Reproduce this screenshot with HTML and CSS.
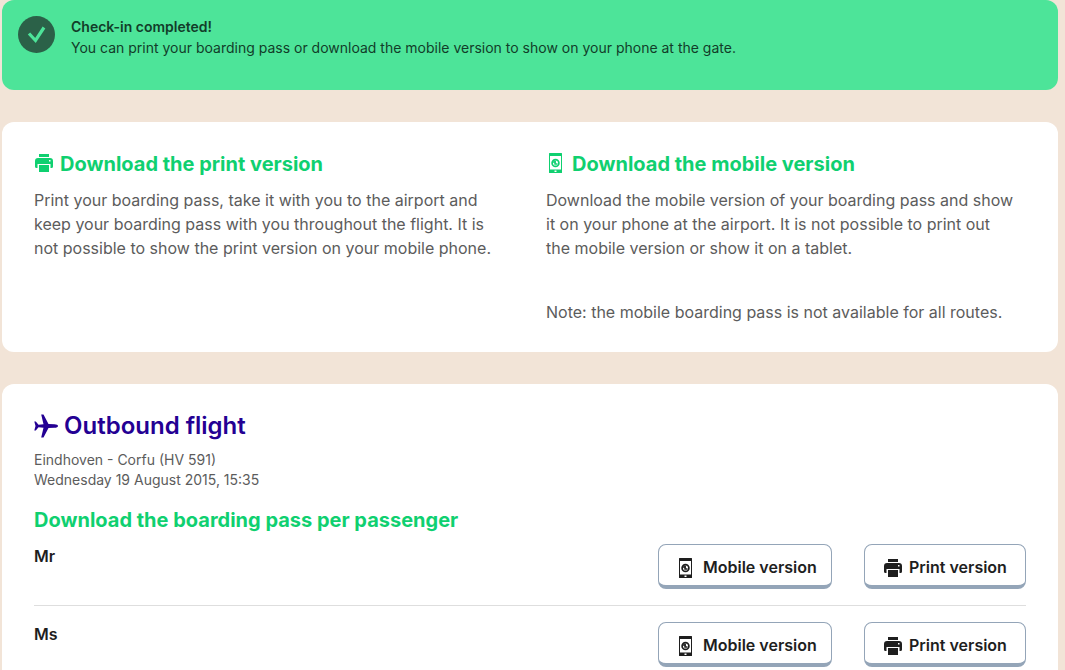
FILE: index.html
```
<!DOCTYPE html>
<html lang="en">
<head>
    <meta charset="UTF-8">
    <meta name="viewport" content="width=device-width, initial-scale=1.0">
    <title>Check-in completed</title>
    <link rel="stylesheet" href="styles.css">
</head>
<body>
    <!-- shared icons -->
    <svg class="sprite" aria-hidden="true">
        <symbol id="icon-print" viewBox="0 0 18 18">
            <path fill="currentColor" d="M4 0h10v3H4z"/>
            <path fill="currentColor" fill-rule="evenodd" d="M3 4h12a3 3 0 0 1 3 3v5.500a1.500 1.500 0 0 1-1.500 1.500H15.500V10H2.500v4H1.500A1.500 1.500 0 0 1 0 12.500V7a3 3 0 0 1 3-3zM14 6v1.500h1.500V6z"/>
            <path fill="currentColor" d="M4 11h10v7H4z"/>
        </symbol>
        <symbol id="icon-mobile" viewBox="0 0 13 20">
            <path fill="currentColor" fill-rule="evenodd" d="M.5 0h12a.5.5 0 0 1 .5.5v19a.5.5 0 0 1-.5.5H.5a.5.5 0 0 1-.5-.5V.5A.5.5 0 0 1 .5 0zM1 3v13.500h11V3zM5.500 17.500v1.500h2v-1.500z"/>
            <circle cx="6.500" cy="10" r="3.400" fill="none" stroke="currentColor" stroke-width="1.700"/>
            <path fill="none" stroke="currentColor" stroke-width="1.500" d="M3.500 9h3.500M6 7.500v3.500h2.500"/>
        </symbol>
    </svg>

    <div class="notice" role="status">
        <svg class="notice-icon" viewBox="0 0 37 37" aria-hidden="true">
            <circle cx="18.500" cy="18.500" r="18.500" fill="#2b6148"/>
            <path d="M11 17.500l6.500 7L26 11.500" fill="none" stroke="#4de499" stroke-width="3.200"/>
        </svg>
        <div class="notice-text">
            <strong>Check-in completed!</strong>
            <p>You can print your boarding pass or download the mobile version to show on your phone at the gate.</p>
        </div>
    </div>

    <section class="card versions">
        <div class="version">
            <h2><svg class="icon-print" aria-hidden="true"><use href="#icon-print"/></svg>Download the print version</h2>
            <p>Print your boarding pass, take it with you to the airport and<br>keep your boarding pass with you throughout the flight. It is<br>not possible to show the print version on your mobile phone.</p>
        </div>
        <div class="version">
            <h2><svg class="icon-mobile" aria-hidden="true"><use href="#icon-mobile"/></svg>Download the mobile version</h2>
            <p>Download the mobile version of your boarding pass and show<br>it on your phone at the airport. It is not possible to print out<br>the mobile version or show it on a tablet.</p>
            <p class="note">Note: the mobile boarding pass is not available for all routes.</p>
        </div>
    </section>

    <section class="card flight">
        <h1>
            <svg class="icon-plane" viewBox="0 0 24 24" aria-hidden="true">
                <path fill="currentColor" d="M24 12c0 1-1.500 1.800-3.500 1.800L14.500 14 9.500 23.500H7.200L9.500 13.800 4.500 13.200 1.800 16.500H.3L1.500 12 .3 7.500H1.800L4.500 10.800l5-.6L7.200.5H9.500L14.500 10l6 .2c2 0 3.500.8 3.500 1.800z"/>
            </svg>Outbound flight
        </h1>
        <p class="route">Eindhoven - Corfu (HV 591)<br>Wednesday 19 August 2015, 15:35</p>
        <h2>Download the boarding pass per passenger</h2>
        <ul class="passengers">
            <li class="passenger">
                <span class="name">Mr</span>
                <button type="button" class="btn btn-mobile"><svg class="icon-mobile" aria-hidden="true"><use href="#icon-mobile"/></svg>Mobile version</button>
                <button type="button" class="btn btn-print"><svg class="icon-print" aria-hidden="true"><use href="#icon-print"/></svg>Print version</button>
            </li>
            <li class="passenger">
                <span class="name">Ms</span>
                <button type="button" class="btn btn-mobile"><svg class="icon-mobile" aria-hidden="true"><use href="#icon-mobile"/></svg>Mobile version</button>
                <button type="button" class="btn btn-print"><svg class="icon-print" aria-hidden="true"><use href="#icon-print"/></svg>Print version</button>
            </li>
        </ul>
    </section>
</body>
</html>
```
FILE: styles.css
```
* {
    margin: 0;
    padding: 0;
    box-sizing: border-box;
}

body {
    display: flex;
    flex-direction: column;
    gap: 32px;
    min-height: 100vh;
    padding: 0 7px 0 2px;
    background: #f2e4d7;
    color: #1e1e1e;
    font-family: Inter, "Open Sans", sans-serif;
    font-size: 16px;
    line-height: 24px;
}

.sprite {
    display: none;
}

.notice {
    display: flex;
    gap: 16px;
    padding: 16px 16px 32px;
    border-radius: 12px;
    background: #4de499;
    color: #123d29;
    font-size: 14px;
    line-height: 21px;
}

.notice-icon {
    flex: none;
    width: 37px;
    height: 37px;
}

.notice-text strong {
    display: block;
    font-weight: 600;
}

.card {
    padding: 32px;
    border-radius: 12px;
    background: #fff;
}

h2 {
    display: flex;
    align-items: center;
    color: #0fd070;
    font-size: 20px;
    font-weight: 700;
    line-height: 24px;
}

.icon-print {
    width: 18px;
    height: 18px;
}

.icon-mobile {
    width: 13px;
    height: 20px;
}

.versions {
    display: grid;
    grid-template-columns: 1fr 1fr;
    gap: 32px;
    padding: 30px 32px 28px;
    color: #5c5c5c;
}

.version h2 {
    gap: 7px;
    margin-bottom: 12px;
}

.version h2 svg {
    margin-bottom: 2px;
}

.version .icon-print {
    margin-left: 1px;
}

.version .icon-mobile {
    margin-left: 3px;
    margin-right: 3px;
}

.note {
    margin-top: 40px;
}

.flight {
    flex: 1;
    padding: 28px 32px 0;
    border-radius: 12px 12px 0 0;
}

h1 {
    display: flex;
    align-items: center;
    gap: 6px;
    color: #240093;
    font-size: 24px;
    font-weight: 600;
    line-height: 28px;
}

.icon-plane {
    width: 24px;
    height: 24px;
}

.route {
    margin: 10px 0 18px;
    color: #5c5c5c;
    font-size: 14px;
    line-height: 20px;
}

.passengers {
    margin-top: 12px;
    list-style: none;
}

.passenger {
    display: flex;
    align-items: flex-start;
    gap: 32px;
    padding-bottom: 16px;
    border-bottom: 1px solid #dedede;
}

.passenger + .passenger {
    padding: 16px 0 0;
    border-bottom: 0;
}

.name {
    flex: 1;
    font-weight: 600;
}

.btn {
    display: flex;
    align-items: center;
    height: 45px;
    padding-top: 3px;
    border: 1px solid #94a5b8;
    border-bottom-width: 4px;
    border-radius: 8px;
    background: #fff;
    color: #1e1e1e;
    font: 600 16px/24px Inter, "Open Sans", sans-serif;
    cursor: pointer;
}

.btn svg {
    margin-top: 2px;
}

.btn-mobile {
    gap: 11px;
    width: 174px;
    padding-left: 20px;
}

.btn-print {
    gap: 7px;
    width: 162px;
    padding-left: 19px;
}

.btn:hover {
    background: #f4f7fa;
}
```
